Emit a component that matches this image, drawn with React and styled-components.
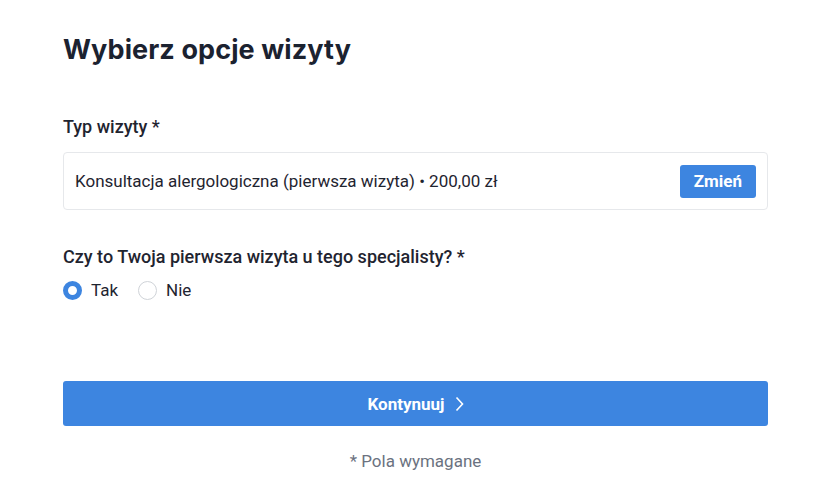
import React, { useState } from 'react';
import styled, { createGlobalStyle } from 'styled-components';

const GlobalStyle = createGlobalStyle`
  body {
    margin: 0;
    background: #ffffff;
    font-family: Roboto, "Liberation Sans", sans-serif;
    color: #1f2430;
  }
`;

const Page = styled.div`
  width: 705px;
  padding: 30px 0 0 63px;
`;

const Title = styled.h1`
  margin: 0 0 46px;
  font-family: Inter, "Open Sans", sans-serif;
  font-weight: 700;
  font-size: 27px;
  line-height: 40px;
  letter-spacing: 0.1px;
  color: #1b2230;
`;

const Label = styled.div`
  font-size: 18px;
  font-weight: 500;
  line-height: 22px;
  color: #1f2430;
  margin-bottom: ${p => p.$gap || 14}px;
`;

const SelectBox = styled.div`
  display: flex;
  align-items: center;
  justify-content: space-between;
  height: 56px;
  padding: 0 11px 0 11px;
  border: 1px solid #e6e8eb;
  border-radius: 4px;
  font-size: 17px;
  color: #1f2430;
  margin-bottom: 36px;
`;

const SmallButton = styled.button`
  height: 33px;
  padding: 0 14px;
  border: none;
  border-radius: 3px;
  background: #3d85e0;
  color: #fff;
  font-family: Roboto, "Liberation Sans", sans-serif;
  font-weight: 700;
  font-size: 17px;
`;

const RadioRow = styled.div`
  display: flex;
  gap: 20px;
  height: 22px;
  margin-bottom: 80px;
`;

const RadioLabel = styled.label`
  display: flex;
  align-items: center;
  gap: 9px;
  font-size: 17px;
  color: #1f2430;
  cursor: pointer;
`;

const RadioDot = styled.span`
  width: 19px;
  height: 19px;
  box-sizing: border-box;
  border-radius: 50%;
  border: ${p => (p.$checked ? '5px solid #3d85e0' : '1px solid #cfd3d8')};
  background: #fff;
`;

const MainButton = styled.button`
  display: flex;
  align-items: center;
  justify-content: center;
  gap: 10px;
  width: 100%;
  height: 45px;
  border: none;
  border-radius: 3px;
  background: #3d85e0;
  color: #fff;
  font-family: Roboto, "Liberation Sans", sans-serif;
  font-weight: 700;
  font-size: 17px;
  margin-bottom: 25px;
`;

const Footnote = styled.div`
  text-align: center;
  font-size: 17px;
  line-height: 20px;
  color: #6b7280;
`;

export default function App() {
  const [first, setFirst] = useState(true);
  return (
    <>
      <GlobalStyle />
      <Page>
        <Title>Wybierz opcje wizyty</Title>
        <Label>Typ wizyty *</Label>
        <SelectBox>
          <span>Konsultacja alergologiczna (pierwsza wizyta) • 200,00 zł</span>
          <SmallButton>Zmień</SmallButton>
        </SelectBox>
        <Label $gap={11}>Czy to Twoja pierwsza wizyta u tego specjalisty? *</Label>
        <RadioRow>
          <RadioLabel onClick={() => setFirst(true)}>
            <RadioDot $checked={first} />
            Tak
          </RadioLabel>
          <RadioLabel onClick={() => setFirst(false)}>
            <RadioDot $checked={!first} />
            Nie
          </RadioLabel>
        </RadioRow>
        <MainButton>
          Kontynuuj
          <svg width="9" height="16" viewBox="0 0 9 16" fill="none">
            <path d="M1.5 1.5 L7.5 8 L1.5 14.5" stroke="#fff" strokeWidth="1.6" />
          </svg>
        </MainButton>
        <Footnote>* Pola wymagane</Footnote>
      </Page>
    </>
  );
}
